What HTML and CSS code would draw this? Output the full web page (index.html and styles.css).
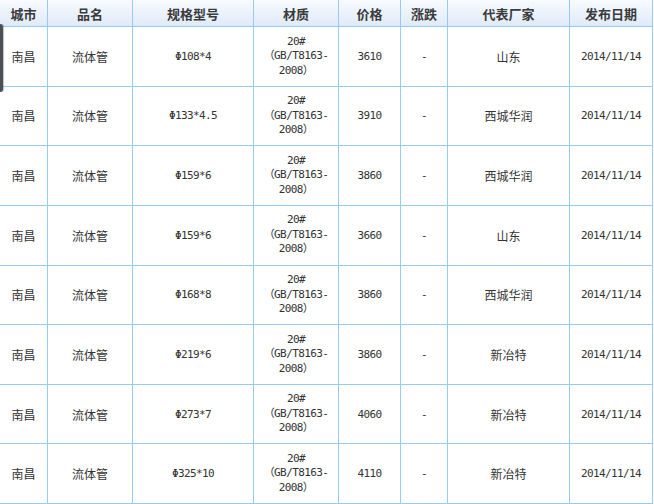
FILE: index.html
```html
<!DOCTYPE html>
<html lang="zh">
<head>
<meta charset="utf-8">
<link rel="stylesheet" href="styles.css">
</head>
<body>
<div class="wrap">
<table class="grid">
<colgroup>
<col class="c1"><col class="c2"><col class="c3"><col class="c4"><col class="c5"><col class="c6"><col class="c7"><col class="c8">
</colgroup>
<thead>
<tr class="head"><th>城市</th><th>品名</th><th>规格型号</th><th>材质</th><th>价格</th><th>涨跌</th><th>代表厂家</th><th>发布日期</th></tr>
</thead>
<tbody>
<tr><td>南昌</td><td>流体管</td><td class="lat">Φ108*4</td><td class="lat mat">20#<br>（GB/T8163-<br>2008）</td><td class="lat">3610</td><td class="lat">-</td><td>山东</td><td class="lat">2014/11/14</td></tr>
<tr><td>南昌</td><td>流体管</td><td class="lat">Φ133*4.5</td><td class="lat mat">20#<br>（GB/T8163-<br>2008）</td><td class="lat">3910</td><td class="lat">-</td><td>西城华润</td><td class="lat">2014/11/14</td></tr>
<tr><td>南昌</td><td>流体管</td><td class="lat">Φ159*6</td><td class="lat mat">20#<br>（GB/T8163-<br>2008）</td><td class="lat">3860</td><td class="lat">-</td><td>西城华润</td><td class="lat">2014/11/14</td></tr>
<tr><td>南昌</td><td>流体管</td><td class="lat">Φ159*6</td><td class="lat mat">20#<br>（GB/T8163-<br>2008）</td><td class="lat">3660</td><td class="lat">-</td><td>山东</td><td class="lat">2014/11/14</td></tr>
<tr><td>南昌</td><td>流体管</td><td class="lat">Φ168*8</td><td class="lat mat">20#<br>（GB/T8163-<br>2008）</td><td class="lat">3860</td><td class="lat">-</td><td>西城华润</td><td class="lat">2014/11/14</td></tr>
<tr><td>南昌</td><td>流体管</td><td class="lat">Φ219*6</td><td class="lat mat">20#<br>（GB/T8163-<br>2008）</td><td class="lat">3860</td><td class="lat">-</td><td>新冶特</td><td class="lat">2014/11/14</td></tr>
<tr><td>南昌</td><td>流体管</td><td class="lat">Φ273*7</td><td class="lat mat">20#<br>（GB/T8163-<br>2008）</td><td class="lat">4060</td><td class="lat">-</td><td>新冶特</td><td class="lat">2014/11/14</td></tr>
<tr><td>南昌</td><td>流体管</td><td class="lat">Φ325*10</td><td class="lat mat">20#<br>（GB/T8163-<br>2008）</td><td class="lat">4110</td><td class="lat">-</td><td>新冶特</td><td class="lat">2014/11/14</td></tr>
</tbody>
</table>
<div class="tab"></div>
</div>
</body>
</html>
```
FILE: styles.css
```css
html, body {
  margin: 0;
  padding: 0;
  background: #ffffff;
}
.wrap {
  position: relative;
  width: 654px;
  height: 504px;
  overflow: hidden;
}
.grid {
  border-collapse: separate;
  border-spacing: 0;
  table-layout: fixed;
  width: 653px;
  font-family: "Noto Sans CJK SC", "DejaVu Sans", sans-serif;
  font-size: 12px;
  color: #333333;
}
.c1 { width: 48px; }
.c2 { width: 85px; }
.c3 { width: 121px; }
.c4 { width: 85px; }
.c5 { width: 62px; }
.c6 { width: 47px; }
.c7 { width: 122px; }
.c8 { width: 83px; }
.grid th, .grid td {
  padding: 0;
  text-align: center;
  vertical-align: middle;
  border-right: 1px solid #99c9f6;
  border-bottom: 1px solid #99c9f6;
  box-sizing: border-box;
}
.head th {
  height: 27px;
  font-size: 13px;
  font-weight: bold;
  color: #3a3a3a;
  background: linear-gradient(#f8fbff, #dfeaf9);
}
.grid tbody tr {
  height: 59.625px;
}
.lat {
  font-family: "DejaVu Sans Mono", "Noto Sans CJK SC", monospace;
  font-size: 11px;
  letter-spacing: -0.6px;
  color: #333333;
}
.mat {
  line-height: 14.5px;
  padding-top: 1px;
}
.tab {
  position: absolute;
  left: 0;
  top: 24px;
  width: 3px;
  height: 68px;
  background: #4b5057;
  border-radius: 0 3px 3px 0;
  box-shadow: 1px 0 1px rgba(0,0,0,0.25);
}
```
